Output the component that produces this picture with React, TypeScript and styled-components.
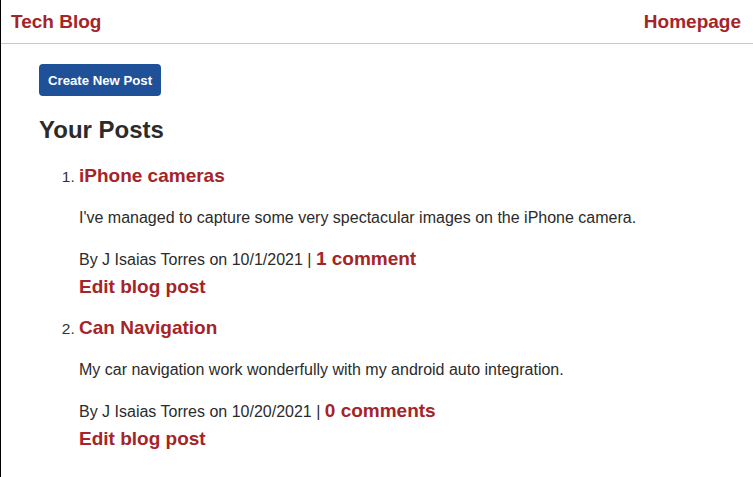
import React from "react";
import styled, { createGlobalStyle } from "styled-components";

const Global = createGlobalStyle`
  html, body { margin: 0; padding: 0; background: #fff; }
  body { font-family: "Liberation Sans", Arial, Helvetica, sans-serif; color: #333; }
`;

const Page = styled.div`
  min-height: 477px;
  border-left: 1px solid #000;
  box-sizing: border-box;
`;

const Header = styled.header`
  height: 43px;
  border-bottom: 1px solid #c8c8c8;
  display: flex;
  align-items: center;
  justify-content: space-between;
  padding: 0 12px 0 10px;
`;

const NavLink = styled.a`
  color: #a52428;
  font-weight: bold;
  font-size: 19px;
  text-decoration: none;
`;

const Main = styled.main`
  padding: 20px 0 0 38px;
`;

const Button = styled.button`
  height: 32px;
  padding: 0 9px;
  background: #1f5199;
  color: #fff;
  border: none;
  border-radius: 4px;
  font-family: inherit;
  font-weight: bold;
  font-size: 13.2px;
  cursor: pointer;
`;

const Heading = styled.h2`
  margin: 20px 0 0 0;
  font-size: 24px;
  line-height: 28px;
  font-weight: bold;
  color: #2b2b2b;
`;

const List = styled.ol`
  margin: 21px 0 0 0;
  padding-left: 40px;
  font-size: 15.5px;
`;

const Item = styled.li<{ $first?: boolean }>`
  margin-top: ${(p) => (p.$first ? "0" : "19px")};
  line-height: 22px;
`;

const Title = styled.a`
  color: #a52428;
  font-weight: bold;
  font-size: 19px;
  text-decoration: none;
  line-height: 22px;
`;

const Body = styled.p`
  margin: 20px 0 0 0;
  line-height: 20px;
  font-size: 16px;
  color: #2b2b2b;
`;

const Byline = styled.p`
  margin: 21px 0 0 0;
  line-height: 20px;
  font-size: 16px;
  color: #2b2b2b;
`;

const Comments = styled.a`
  color: #a52428;
  font-weight: bold;
  font-size: 19px;
  text-decoration: none;
`;

const Edit = styled.a`
  display: block;
  margin-top: 6px;
  color: #a52428;
  font-weight: bold;
  font-size: 19px;
  line-height: 22px;
  text-decoration: none;
`;

const posts = [
  {
    title: "iPhone cameras",
    body: "I've managed to capture some very spectacular images on the iPhone camera.",
    date: "10/1/2021",
    comments: "1 comment",
  },
  {
    title: "Can Navigation",
    body: "My car navigation work wonderfully with my android auto integration.",
    date: "10/20/2021",
    comments: "0 comments",
  },
];

export default function App() {
  return (
    <Page>
      <Global />
      <Header>
        <NavLink href="#">Tech Blog</NavLink>
        <NavLink href="#">Homepage</NavLink>
      </Header>
      <Main>
        <Button>Create New Post</Button>
        <Heading>Your Posts</Heading>
        <List>
          {posts.map((p, i) => (
            <Item key={p.title} $first={i === 0}>
              <Title href="#">{p.title}</Title>
              <Body>{p.body}</Body>
              <Byline>
                By J Isaias Torres on {p.date} | <Comments href="#">{p.comments}</Comments>
              </Byline>
              <Edit href="#">Edit blog post</Edit>
            </Item>
          ))}
        </List>
      </Main>
    </Page>
  );
}
